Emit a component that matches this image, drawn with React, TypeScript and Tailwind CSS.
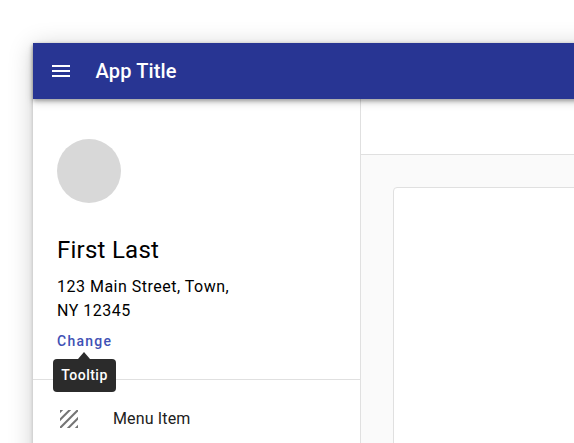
export default function App() {
  return (
    <div className="h-[443px] w-[574px] overflow-hidden bg-white pl-[33px] pt-[43px] font-['Roboto',sans-serif] text-black">
      <div className="flex h-[800px] w-[900px] flex-col bg-white shadow-[0_2px_4px_rgba(0,0,0,0.2),0_4px_24px_rgba(0,0,0,0.2)]">
        <header className="z-10 flex h-14 shrink-0 items-center bg-[#283593] pl-4 text-white shadow-[0_2px_4px_rgba(0,0,0,0.3),0_4px_8px_rgba(0,0,0,0.14)]">
          <svg className="size-6" viewBox="0 0 24 24" fill="currentColor"><path d="M3 18h18v-2H3v2zm0-5h18v-2H3v2zm0-7v2h18V6H3z" /></svg>
          <h1 className="ml-[22.5px] text-xl font-medium tracking-[0.15px]">App Title</h1>
        </header>
        <div className="flex grow">
          <aside className="w-[328px] shrink-0 border-r border-[#e0e0e0]">
            <section className="h-[281px] border-b border-[#e0e0e0] px-6 pt-10">
              <div className="size-16 rounded-full bg-[#d8d8d8]" />
              <h2 className="mt-[31px] text-2xl leading-8 tracking-[0.25px]">First Last</h2>
              <p className="mt-[9px] text-base leading-6 tracking-[0.5px]">123 Main Street, Town,<br />NY 12345</p>
              <div className="relative mt-[10px] w-fit">
                <a className="block text-sm font-medium leading-4 tracking-[1.25px] text-[#3f51b5]">Change</a>
                <div className="absolute -left-1 top-[26px] flex h-[33px] w-[63px] items-center justify-center rounded bg-[#2b2b2b] pb-px text-sm font-medium tracking-[0.5px] text-white">
                  <svg className="absolute -top-[7px] left-[24.5px] h-[7px] w-3" viewBox="0 0 12 7" fill="#2b2b2b"><path d="M6 0l6 7H0z" /></svg>
                  Tooltip
                </div>
              </div>
            </section>
            <div className="flex h-20 items-start pl-6 pt-[27px]">
              <svg className="size-6" viewBox="0 0 24 24" fill="#757575"><path d="M3 3h3.2L3 6.2zM11.3 3h2.9L3 14.2v-2.9zM19.5 3H21v1.5L4.5 21H3v-1.5zM21 9.8v2.9L12.7 21H9.8zM21 17.8V21h-3.2z" /></svg>
              <span className="ml-8 text-base leading-6 tracking-[0.15px] text-[#212121]">Menu Item</span>
            </div>
          </aside>
          <main className="grow bg-[#fafafa]">
            <div className="h-14 border-b border-[#e0e0e0] bg-white" />
            <div className="ml-8 mt-8 h-[500px] rounded border border-[#e0e0e0] bg-white" />
          </main>
        </div>
      </div>
    </div>
  );
}
